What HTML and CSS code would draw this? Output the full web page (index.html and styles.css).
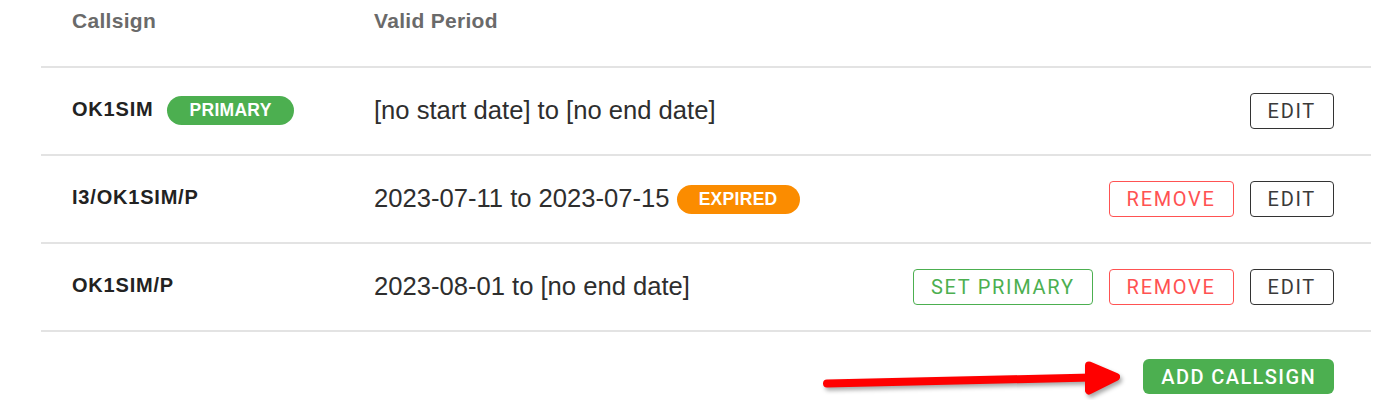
FILE: index.html
```html
<!DOCTYPE html>
<html lang="en">
<head>
    <meta charset="UTF-8">
    <meta name="viewport" content="width=device-width, initial-scale=1.0">
    <title>Callsigns</title>
    <link rel="stylesheet" href="styles.css">
</head>
<body>
    <div class="container">
        <div class="callsigns">
            <div class="row head">
                <div class="col-call">Callsign</div>
                <div class="col-period">Valid Period</div>
                <div class="col-actions"></div>
            </div>

            <div class="row">
                <div class="col-call">OK1SIM <span class="badge primary">PRIMARY</span></div>
                <div class="col-period">[no start date] to [no end date]</div>
                <div class="col-actions">
                    <button class="btn btn-edit">Edit</button>
                </div>
            </div>

            <div class="row">
                <div class="col-call">I3/OK1SIM/P</div>
                <div class="col-period">2023-07-11 to 2023-07-15 <span class="badge expired">EXPIRED</span></div>
                <div class="col-actions">
                    <button class="btn btn-remove">Remove</button>
                    <button class="btn btn-edit">Edit</button>
                </div>
            </div>

            <div class="row">
                <div class="col-call">OK1SIM/P</div>
                <div class="col-period">2023-08-01 to [no end date]</div>
                <div class="col-actions">
                    <button class="btn btn-primary">Set primary</button>
                    <button class="btn btn-remove">Remove</button>
                    <button class="btn btn-edit">Edit</button>
                </div>
            </div>
        </div>

        <div class="footer">
            <button class="btn-add">Add callsign</button>
        </div>
    </div>

    <!-- annotation arrow pointing at the add button -->
    <svg class="arrow" width="320" height="50" viewBox="0 0 320 50">
        <line x1="7" y1="33.5" x2="272" y2="27.5" stroke="#ff0000" stroke-width="8" stroke-linecap="round" />
        <polygon points="269,15.5 296,27 269,40.5" fill="#ff0000" stroke="#ff0000" stroke-width="8" stroke-linejoin="round" />
    </svg>
</body>
</html>
```

FILE: styles.css
```css
body {
    margin: 0;
    font-family: "Liberation Sans", Arial, sans-serif;
    background: #fff;
    color: #222;
}

.container {
    position: relative;
    width: 1330px;
    margin-left: 41px;
}

.row {
    display: flex;
    align-items: center;
    height: 86px;
    border-bottom: 2px solid #e3e3e3;
}

.row.head {
    height: 57px;
    padding-top: 9px;
    align-items: flex-start;
}

.col-call {
    width: 302px;
    padding-left: 31px;
    display: flex;
    align-items: center;
    font-size: 20px;
    font-weight: bold;
    letter-spacing: 0.8px;
    color: #222;
    padding-bottom: 3px;
}

.col-period {
    flex: 1;
    display: flex;
    align-items: center;
    font-size: 25.6px;
    color: #2e2e2e;
    white-space: pre;
    padding-bottom: 2px;
}

.head .col-call,
.head .col-period {
    font-size: 21px;
    font-weight: bold;
    letter-spacing: 0.3px;
    color: #6a6a6a;
    padding-bottom: 0;
}

.col-actions {
    display: flex;
    gap: 16px;
    padding-right: 37px;
}

.badge {
    display: inline-block;
    height: 29px;
    line-height: 29px;
    padding: 0 22px;
    border-radius: 15px;
    font-family: "Liberation Sans", Arial, sans-serif;
    font-size: 17.5px;
    font-weight: bold;
    letter-spacing: 0.3px;
    color: #fff;
    margin-top: 2px;
}

.badge.primary {
    background: #4caf50;
    margin-left: 14px;
}

.badge.expired {
    background: #fb8c00;
    margin-left: 0;
}

.btn {
    height: 36px;
    padding: 0 17px;
    background: #fff;
    border: 1px solid #333;
    border-radius: 4px;
    font-family: Roboto, "Liberation Sans", sans-serif;
    font-size: 20px;
    letter-spacing: 1.7px;
    text-transform: uppercase;
    cursor: pointer;
}

.btn-edit {
    color: #3a3a3a;
    border-color: #333;
}

.btn-remove {
    color: #ff5252;
    border-color: #ff5252;
}

.btn-primary {
    color: #4caf50;
    border-color: #4caf50;
}

.footer {
    display: flex;
    justify-content: flex-end;
    padding: 27px 37px 0 0;
}

.btn-add {
    height: 35px;
    padding: 0 18px;
    border: none;
    border-radius: 6px;
    background: #4caf50;
    color: #fff;
    font-family: Roboto, "Liberation Sans", sans-serif;
    font-size: 20px;
    font-weight: 500;
    letter-spacing: 1.4px;
    text-transform: uppercase;
}

.arrow {
    position: absolute;
    left: 820px;
    top: 350px;
    filter: drop-shadow(2px 3px 2px rgba(0, 0, 0, 0.35));
}
```
